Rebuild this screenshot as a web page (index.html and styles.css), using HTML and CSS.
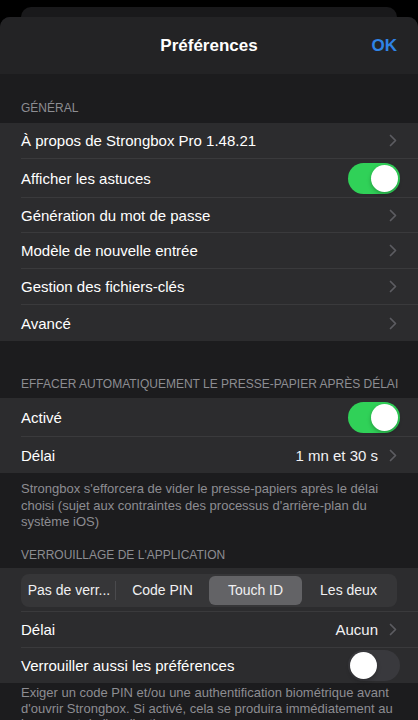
FILE: index.html
```html
<!DOCTYPE html>
<html lang="fr">
  <head>
    <meta charset="utf-8">
    <title>Préférences</title>
    <link rel="stylesheet" href="styles.css">
  </head>
  <body>
    <div class="behind"></div>
    <div class="sheet">
      <div class="navbar">
        <span></span>
        <h1 class="title">Préférences</h1>
        <a class="done">OK</a>
      </div>

      <div class="section-header first">GÉNÉRAL</div>
      <div class="group">
        <div class="row"><div class="row-inner"><span class="label">À propos de Strongbox Pro 1.48.21</span><svg class="chevron" viewBox="0 0 8 13"><polyline points="1.5,1.5 6.5,6.5 1.5,11.5"/></svg></div></div>
        <div class="row row-switch"><div class="row-inner"><span class="label">Afficher les astuces</span><span class="switch on"></span></div></div>
        <div class="row short"><div class="row-inner"><span class="label">Génération du mot de passe</span><svg class="chevron" viewBox="0 0 8 13"><polyline points="1.5,1.5 6.5,6.5 1.5,11.5"/></svg></div></div>
        <div class="row"><div class="row-inner"><span class="label">Modèle de nouvelle entrée</span><svg class="chevron" viewBox="0 0 8 13"><polyline points="1.5,1.5 6.5,6.5 1.5,11.5"/></svg></div></div>
        <div class="row"><div class="row-inner"><span class="label">Gestion des fichiers-clés</span><svg class="chevron" viewBox="0 0 8 13"><polyline points="1.5,1.5 6.5,6.5 1.5,11.5"/></svg></div></div>
        <div class="row last"><div class="row-inner"><span class="label">Avancé</span><svg class="chevron" viewBox="0 0 8 13"><polyline points="1.5,1.5 6.5,6.5 1.5,11.5"/></svg></div></div>
      </div>

      <div class="section-header">EFFACER AUTOMATIQUEMENT LE PRESSE-PAPIER APRÈS DÉLAI</div>
      <div class="group">
        <div class="row row-switch"><div class="row-inner"><span class="label">Activé</span><span class="switch on"></span></div></div>
        <div class="row last"><div class="row-inner"><span class="label">Délai</span><span class="value">1 mn et 30 s</span><svg class="chevron" viewBox="0 0 8 13"><polyline points="1.5,1.5 6.5,6.5 1.5,11.5"/></svg></div></div>
      </div>
      <p class="section-footer">Strongbox s'efforcera de vider le presse-papiers après le délai choisi (sujet aux contraintes des processus d'arrière-plan du système iOS)</p>

      <div class="section-header after-footer">VERROUILLAGE DE L'APPLICATION</div>
      <div class="group">
        <div class="row row-segment"><div class="row-inner">
          <div class="segmented">
            <span class="segment divided">Pas de verr...</span>
            <span class="segment">Code PIN</span>
            <span class="segment selected">Touch ID</span>
            <span class="segment">Les deux</span>
          </div>
        </div></div>
        <div class="row"><div class="row-inner"><span class="label">Délai</span><span class="value">Aucun</span><svg class="chevron" viewBox="0 0 8 13"><polyline points="1.5,1.5 6.5,6.5 1.5,11.5"/></svg></div></div>
        <div class="row row-switch compact last"><div class="row-inner"><span class="label">Verrouiller aussi les préférences</span><span class="switch"></span></div></div>
      </div>
      <p class="section-footer tight">Exiger un code PIN et/ou une authentification biométrique avant d'ouvrir Strongbox. Si activé, cela se produira immédiatement au lancement de l'application.</p>
    </div>
  </body>
</html>
```

FILE: styles.css
```css
html, body {
  margin: 0;
  background-color: #000;
}
body {
  width: 418px;
  height: 720px;
  overflow: hidden;
  font-family: "Liberation Sans", Arial, sans-serif;
  color: #fff;
  -webkit-font-smoothing: antialiased;
}
.behind {
  height: 10px;
  margin: 7px 21px 0;
  background-color: #19191b;
  border-radius: 10px 10px 0 0;
}
.sheet {
  background-color: #1c1c1e;
  border-radius: 10px 10px 0 0;
  overflow: hidden;
}
.navbar {
  display: grid;
  grid-template-columns: 1fr auto 1fr;
  align-items: center;
  height: 57px;
  padding: 0 21px;
  background-color: #232325;
}
.title {
  margin: 0;
  font-size: 17px;
  font-weight: 700;
}
.done {
  justify-self: end;
  color: #2f84e6;
  font-size: 17px;
  font-weight: 700;
}
.section-header {
  padding: 36px 21px 6px;
  font-size: 12px;
  line-height: 15px;
  color: #8d8d92;
  white-space: nowrap;
}
.section-header.first {
  padding-top: 27px;
  padding-bottom: 7px;
}
.section-header.after-footer {
  padding-top: 17px;
  padding-bottom: 5.5px;
}
.group {
  background-color: #2c2c2e;
}
.row {
  padding-left: 21px;
}
.row-inner {
  display: flex;
  align-items: center;
  height: 36px;
  padding-right: 21px;
  border-bottom: 1px solid #3a3a3c;
  box-sizing: border-box;
}
.row.last .row-inner {
  border-bottom: none;
}
.row.short .row-inner {
  height: 35px;
}
.row-switch .row-inner {
  height: 39px;
  padding-right: 18px;
}
.row-switch.compact .row-inner {
  height: 35px;
}
.label {
  flex: 1;
  font-size: 15px;
  white-space: nowrap;
}
.value {
  margin-right: 11px;
  font-size: 15px;
  color: #f2f2f4;
}
.chevron {
  width: 8px;
  height: 13px;
  fill: none;
  stroke: #5c5c61;
  stroke-width: 1.7;
  stroke-linecap: round;
  stroke-linejoin: round;
}
.switch {
  position: relative;
  width: 52px;
  height: 31px;
  border-radius: 16px;
  background-color: #39393d;
}
.switch::after {
  content: "";
  position: absolute;
  top: 2px;
  left: 2px;
  width: 27px;
  height: 27px;
  border-radius: 50%;
  background-color: #fff;
  box-shadow: 0 2px 4px rgba(0, 0, 0, 0.25);
}
.switch.on {
  background-color: #30d158;
}
.switch.on::after {
  left: 23px;
}
.row-segment .row-inner {
  height: 44px;
  padding: 6px 21px 5px 0;
}
.segmented {
  flex: 1;
  display: grid;
  grid-template-columns: repeat(4, 1fr);
  height: 33px;
  padding: 2px;
  box-sizing: border-box;
  border-radius: 8px;
  background-color: #363638;
}
.segment {
  display: flex;
  align-items: center;
  justify-content: center;
  font-size: 14px;
  color: #f0f0f2;
  border-radius: 6px;
  white-space: nowrap;
}
.segment.divided {
  border-right: 1px solid #4a4a4d;
  border-radius: 0;
  margin: 5px 0;
}
.segment.selected {
  background-color: #636366;
}
.section-footer {
  margin: 0;
  padding: 8px 21px 0;
  font-size: 13px;
  line-height: 16.5px;
  color: #8d8d92;
}
.section-footer.tight {
  padding-top: 2px;
  line-height: 15.5px;
}
```
